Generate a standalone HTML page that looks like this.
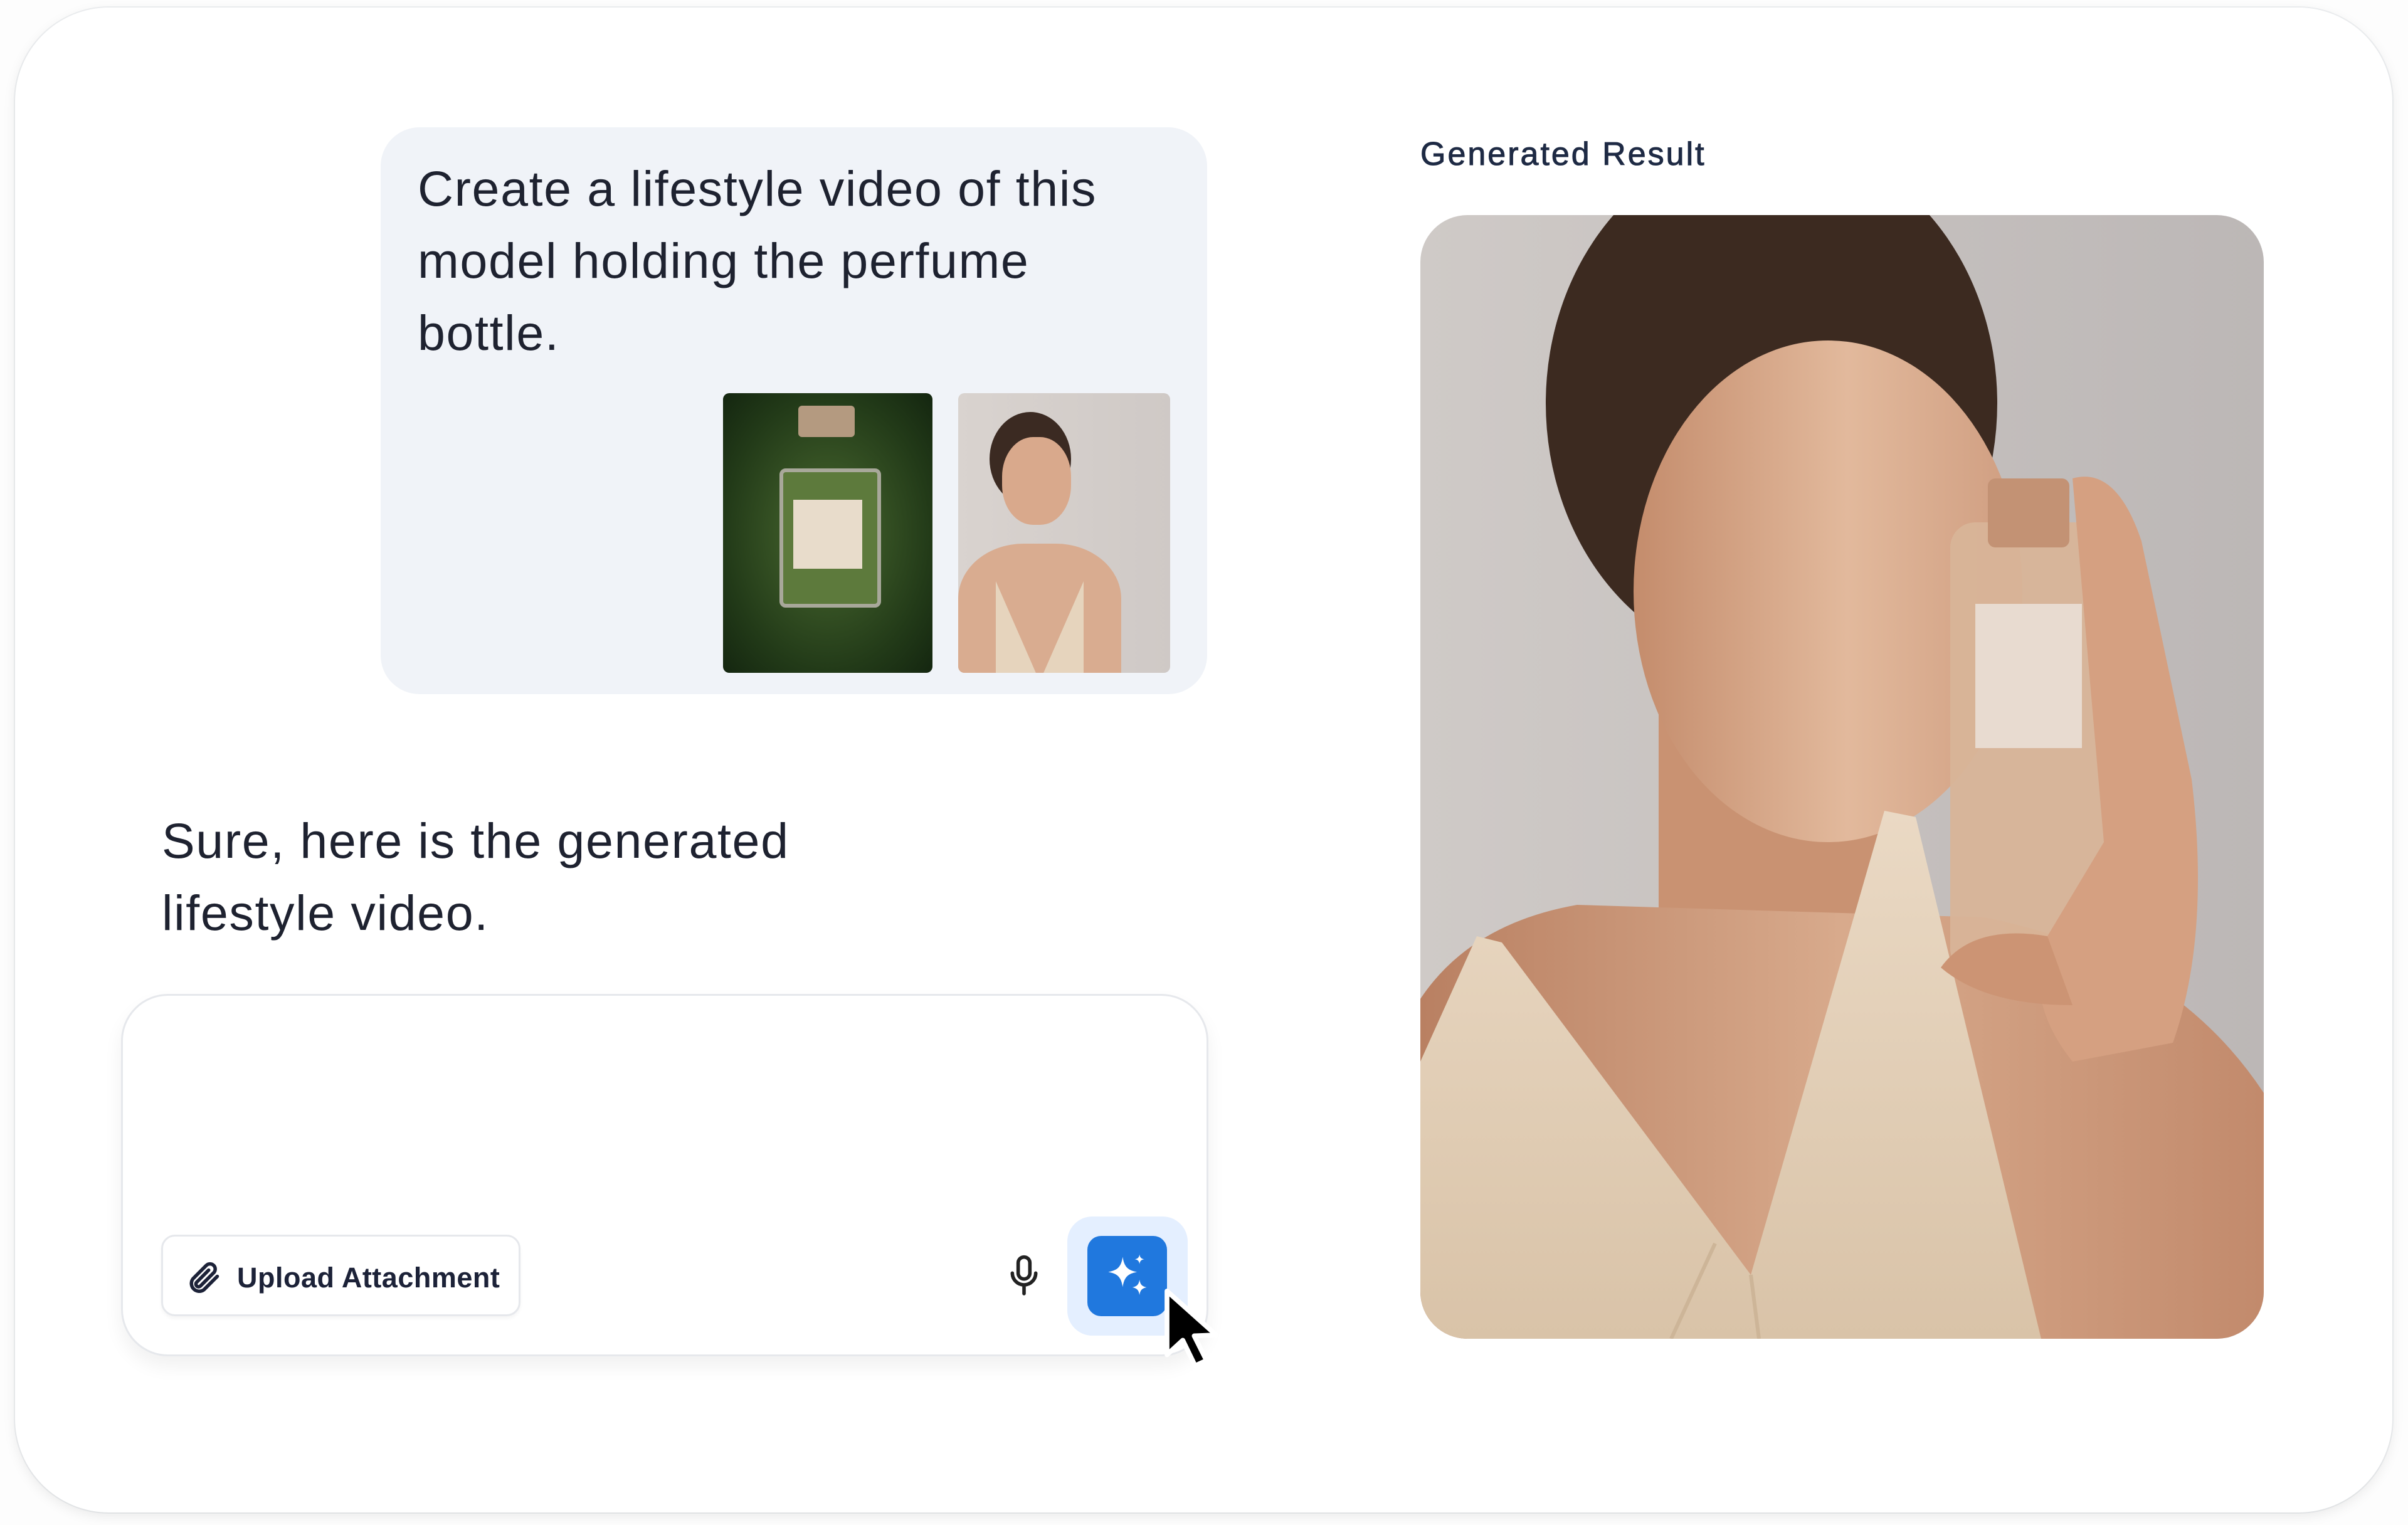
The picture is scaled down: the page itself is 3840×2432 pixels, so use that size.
<!DOCTYPE html>
<html><head><meta charset="utf-8"><style>
html,body{margin:0;padding:0;width:3840px;height:2432px;background:#fdfdfd;overflow:hidden;font-family:"Liberation Sans",sans-serif}
.card{position:absolute;left:24px;top:12px;width:3791px;height:2400px;border-radius:150px;background:#fff;box-shadow:0 6px 20px rgba(0,0,0,.08),0 0 0 2px #eef0f2}
.bubble{position:absolute;left:607px;top:203px;width:1318px;height:904px;border-radius:62px;background:#f0f3f8}
.t1{position:absolute;left:666px;top:243px;font-size:79px;line-height:115px;color:#1e2230;width:1250px;letter-spacing:1.6px}
.th{position:absolute;top:627px;height:446px;border-radius:10px;overflow:hidden}
.t2{position:absolute;left:258px;top:1283px;font-size:79px;line-height:115px;color:#1e2230;letter-spacing:1.6px}
.input{position:absolute;left:193px;top:1585px;width:1734px;height:578px;border-radius:75px;background:#fff;border:3px solid #e6e8ec;box-sizing:border-box;box-shadow:0 16px 30px rgba(0,0,0,.06)}
.up{position:absolute;left:257px;top:1969px;width:573px;height:130px;border-radius:22px;border:3px solid #e6e8ec;box-sizing:border-box;background:#fff;box-shadow:0 4px 6px rgba(0,0,0,.04)}
.up span{position:absolute;left:118px;top:40px;font-size:45px;font-weight:bold;color:#1c2238;letter-spacing:.5px}
.halo{position:absolute;left:1702px;top:1940px;width:192px;height:190px;border-radius:40px;background:#e4efff}
.send{position:absolute;left:1734px;top:1971px;width:127px;height:128px;border-radius:22px;background:#2078de}
.gr{position:absolute;left:2265px;top:216px;font-size:52px;color:#1e2a44;letter-spacing:3px;-webkit-text-stroke:1px #1e2a44}
.photo{position:absolute;left:2265px;top:343px;width:1345px;height:1792px;border-radius:75px;overflow:hidden}
</style></head><body>
<div class="card"></div>
<div class="bubble"></div>
<div class="t1">Create a lifestyle video of this<br>model holding the perfume<br>bottle.</div>
<div class="th" style="left:1153px;width:334px;background:radial-gradient(ellipse at 50% 50%,#4a6a30,#223a18 70%,#142610)">
 <div style="position:absolute;left:120px;top:20px;width:90px;height:50px;background:#b49a80;border-radius:6px"></div>
 <div style="position:absolute;left:90px;top:120px;width:150px;height:210px;border:6px solid #a8a89a;border-radius:10px;background:#5d7a3c"></div>
 <div style="position:absolute;left:112px;top:170px;width:110px;height:110px;background:#e8dccb"></div>
</div>
<div class="th" style="left:1528px;width:338px;background:linear-gradient(90deg,#d9d3cf,#cfc9c6)">
 <div style="position:absolute;left:50px;top:30px;width:130px;height:150px;border-radius:50%;background:#3b2a22"></div>
 <div style="position:absolute;left:70px;top:70px;width:110px;height:140px;border-radius:45%;background:#d9a98c"></div>
 <div style="position:absolute;left:0;top:240px;width:260px;height:220px;border-radius:40% 40% 0 0;background:#d9ac90"></div>
 <div style="position:absolute;left:60px;top:300px;width:140px;height:160px;background:#e6d4bd;clip-path:polygon(0 0,50% 100%,100% 0,100% 100%,0 100%)"></div>
</div>
<div class="t2">Sure, here is the generated<br>lifestyle video.</div>
<div class="input"></div>
<div class="up"><svg style="position:absolute;left:34px;top:36px" width="60" height="60" viewBox="0 0 24 24" fill="none" stroke="#1c2238" stroke-width="2.2" stroke-linecap="round"><path d="M21 11l-8.5 8.5a5 5 0 0 1-7-7L14 4a3.3 3.3 0 0 1 4.7 4.7l-8.5 8.5a1.7 1.7 0 0 1-2.4-2.4L15.5 7"/></svg><span>Upload Attachment</span></div>
<svg style="position:absolute;left:1605px;top:2000px" width="56" height="70" viewBox="0 0 24 30" fill="none" stroke="#222" stroke-width="2.4" stroke-linecap="round"><rect x="8" y="2" width="8" height="15" rx="4"/><path d="M4 13a8 8 0 0 0 16 0M12 21v6"/></svg>
<div class="halo"></div>
<div class="send"><svg style="position:absolute;left:18px;top:18px" width="92" height="92" viewBox="0 0 24 24" fill="#fff"><path d="M10 4c.6 4 2 5.6 6 6.3-4 .7-5.4 2.3-6 6.3-.6-4-2-5.6-6-6.3 4-.7 5.4-2.3 6-6.3z"/><path d="M17 13.5c.3 2 1 2.8 3 3.2-2 .4-2.7 1.2-3 3.2-.3-2-1-2.8-3-3.2 2-.4 2.7-1.2 3-3.2z"/><path d="M17 3c.2 1.3.7 1.8 2 2-1.3.2-1.8.7-2 2-.2-1.3-.7-1.8-2-2 1.3-.2 1.8-.7 2-2z"/></svg></div>
<svg style="position:absolute;left:1852px;top:2052px" width="130" height="140" viewBox="0 0 18 20"><path d="M1 1l0 14.5 3.6-3.3 2.8 5.8 2.6-1.2-2.8-5.6 5-.2z" fill="#000" stroke="#fff" stroke-width="1.1" stroke-linejoin="round"/></svg>
<div class="gr">Generated Result</div>
<div class="photo">
<svg width="1345" height="1792" viewBox="0 0 1345 1792">
<defs>
<linearGradient id="wall" x1="0" x2="1"><stop offset="0" stop-color="#cfcac7"/><stop offset="1" stop-color="#bcb7b6"/></linearGradient>
<linearGradient id="face" x1="0" x2="1"><stop offset="0" stop-color="#c48c6c"/><stop offset=".55" stop-color="#e2b99c"/><stop offset="1" stop-color="#cf9d80"/></linearGradient>
<linearGradient id="skin" x1="0" x2="1"><stop offset="0" stop-color="#b98062"/><stop offset=".5" stop-color="#d8aa8c"/><stop offset="1" stop-color="#c28a6c"/></linearGradient>
<linearGradient id="dress" x1="0" y1="0" x2="0" y2="1"><stop offset="0" stop-color="#ead9c4"/><stop offset="1" stop-color="#d9c3a8"/></linearGradient>
</defs>
<rect width="1345" height="1792" fill="url(#wall)"/>
<ellipse cx="560" cy="300" rx="360" ry="420" fill="#3c2a20"/>
<rect x="380" y="780" width="400" height="500" fill="#c99272"/>
<ellipse cx="650" cy="600" rx="310" ry="400" fill="url(#face)"/>
<path d="M0 1250 Q80 1130 250 1100 L900 1120 Q1200 1180 1345 1400 L1345 1792 L0 1792Z" fill="url(#skin)"/>
<path d="M0 1350 L90 1150 L130 1160 L527 1690 L740 950 L790 960 L990 1792 L0 1792Z" fill="url(#dress)"/>
<path d="M527 1690 L540 1792 M400 1792 L470 1640" stroke="#cdb598" stroke-width="6" fill="none"/>
<rect x="845" y="490" width="250" height="720" rx="40" fill="#d8b498" opacity=".95"/>
<rect x="905" y="420" width="130" height="110" rx="12" fill="#c39274"/>
<rect x="885" y="620" width="170" height="230" fill="#e8dbd0"/>
<path d="M1040 420 Q1110 400 1150 520 L1230 900 Q1260 1150 1200 1320 L1040 1350 Q960 1250 1000 1150 L1090 1000 Z" fill="#d5a081"/>
<path d="M1000 1150 Q880 1130 830 1200 Q900 1260 1040 1260 Z" fill="#cc9474"/>
</svg>
</div>
</body></html>
